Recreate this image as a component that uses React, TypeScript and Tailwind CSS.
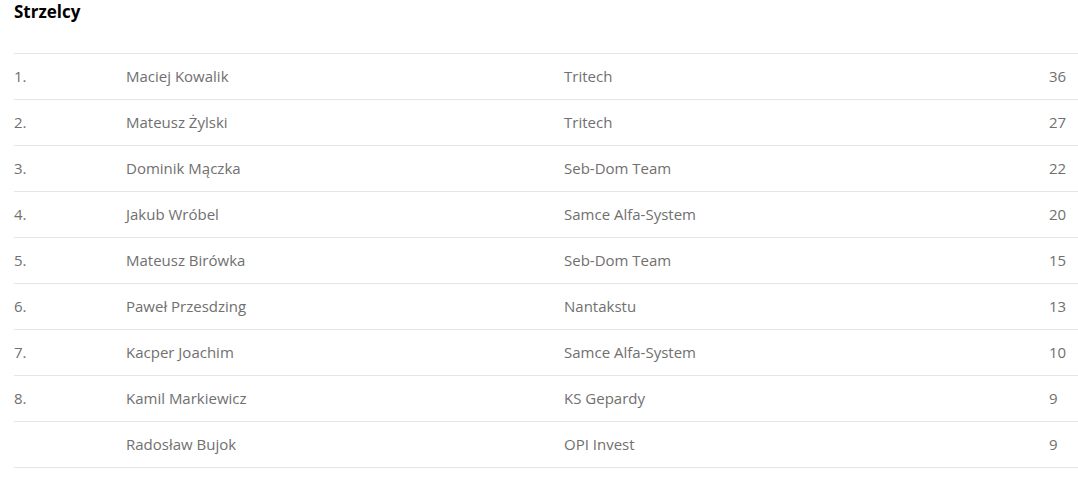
const rows = [
  { pos: "1.", name: "Maciej Kowalik", team: "Tritech", goals: 36 },
  { pos: "2.", name: "Mateusz Żylski", team: "Tritech", goals: 27 },
  { pos: "3.", name: "Dominik Mączka", team: "Seb-Dom Team", goals: 22 },
  { pos: "4.", name: "Jakub Wróbel", team: "Samce Alfa-System", goals: 20 },
  { pos: "5.", name: "Mateusz Birówka", team: "Seb-Dom Team", goals: 15 },
  { pos: "6.", name: "Paweł Przesdzing", team: "Nantakstu", goals: 13 },
  { pos: "7.", name: "Kacper Joachim", team: "Samce Alfa-System", goals: 10 },
  { pos: "8.", name: "Kamil Markiewicz", team: "KS Gepardy", goals: 9 },
  { pos: "", name: "Radosław Bujok", team: "OPI Invest", goals: 9 },
];

export default function App() {
  return (
    <div className="min-h-screen bg-white pl-[14px] font-['Open_Sans',sans-serif]">
      <h3 className="pt-[1px] text-[17px] font-bold leading-[22px] text-black">Strzelcy</h3>
      <div className="mt-[30px] border-b border-[#e6e6e6]">
        {rows.map((r, i) => (
          <div
            key={i}
            className="grid h-[46px] grid-cols-[112px_438px_485px_1fr] items-center border-t border-[#e6e6e6] text-[15px] text-[#707070]"
          >
            <span>{r.pos}</span>
            <span>{r.name}</span>
            <span>{r.team}</span>
            <span>{r.goals}</span>
          </div>
        ))}
      </div>
    </div>
  );
}
